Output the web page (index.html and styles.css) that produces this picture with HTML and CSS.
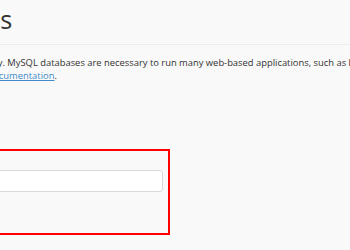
FILE: index.html
```html
<!DOCTYPE html>
<html>
<head>
  <link rel="stylesheet" href="styles.css">
</head>
<body>

<div class="page">
  <header class="page-header">
    <h1>MySQL Databases</h1>
  </header>

  <section class="content">
    <p class="intro">Store and organize your data easily. MySQL databases are necessary to run many web-based applications, such as bulletin boards, content management systems, and online shopping carts.</p>
    <p class="intro">For more information, read the <a href="#">documentation</a>.</p>

    <form class="create-db">
      <label for="db">New Database:</label>
      <div class="input-group">
        <span class="addon">cpuser_</span>
        <input type="text" id="db" name="db">
      </div>
      <button type="button" class="btn">Create Database</button>
    </form>
  </section>
</div>

</body>
</html>
```

FILE: styles.css
```css
* {box-sizing: border-box}

html, body {
  margin: 0;
  background: #f9f9f9;
}

body {
  font-family: "Open Sans", "DejaVu Sans", sans-serif;
  color: #333;
}

.page {
  width: 350px;
  height: 250px;
  overflow: hidden;
}

.page-header {
  margin-left: -199px;
  padding: 6px 0 10px;
  border-bottom: 1px solid #ececec;
}

.page-header h1 {
  margin: 0;
  font-size: 25.2px;
  font-weight: 400;
  line-height: 1.1;
  white-space: nowrap;
}

.content {
  margin-left: -151px;
  width: 1100px;
  padding-top: 11px;
  font-size: 9.4px;
  line-height: 13px;
}

.intro {
  margin: 0;
}

.intro a {
  color: #428bca;
}

.create-db {
  width: 321px;
  margin-top: 67px;
  padding: 4px 5px 6px;
  border: 2px solid #ff0000;
}

.create-db label {
  display: block;
  margin-bottom: 2px;
  font-weight: bold;
}

.input-group {
  display: flex;
  height: 22px;
}

.addon {
  padding: 0 8px;
  line-height: 20px;
  background: #eee;
  border: 1px solid #d6d6d6;
  border-right: none;
  border-radius: 3px 0 0 3px;
}

.input-group input {
  flex: 1;
  min-width: 0;
  height: 22px;
  border: 1px solid #d9d9d9;
  border-radius: 0 3px 3px 0;
  background: #fff;
}

.btn {
  display: block;
  margin-top: 11px;
  height: 24px;
  padding: 0 8px;
  font-family: inherit;
  font-size: 9.4px;
  color: #fff;
  background: #179bd7;
  border: none;
  border-radius: 3px;
}
```
